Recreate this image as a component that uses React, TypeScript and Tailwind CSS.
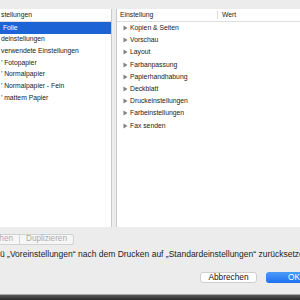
import React from 'react';

// Druckdialog: Voreinstellungen-Liste links, Einstellungen rechts

const presets = [
  { label: '\u00a0Folie', selected: true },
  { label: 'deinstellungen' },
  { label: 'verwendete Einstellungen' },
  { label: '’ Fotopapier' },
  { label: '’ Normalpapier' },
  { label: '’ Normalpapier - Fein' },
  { label: '’ mattem Papier' },
];

const settings = [
  'Kopien & Seiten',
  'Vorschau',
  'Layout',
  'Farbanpassung',
  'Papierhandhabung',
  'Deckblatt',
  'Druckeinstellungen',
  'Farbeinstellungen',
  'Fax senden',
];

function Triangle() {
  return (
    <svg width="5" height="6" viewBox="0 0 5 6" className="shrink-0">
      <path d="M0.5 0.5 L4.5 3 L0.5 5.5 Z" fill="#808080" />
    </svg>
  );
}

export default function App() {
  return (
    <div
      className="w-[300px] h-[300px] overflow-hidden bg-[#ececec] flex flex-col text-[#222]"
      style={{ fontFamily: '"Liberation Sans", Arial, sans-serif' }}
    >
      <div className="mt-[9px] flex h-[218px] gap-[4px]">
        {/* left list */}
        <div className="w-[112px] bg-white border-r border-[#c9c9c9] flex flex-col text-[6.8px]">
          <div className="h-[13px] border-b border-[#dedede] flex items-center pl-[1px] whitespace-nowrap">
            stellungen
          </div>
          {presets.map((p) => (
            <div
              key={p.label}
              className={
                p.selected
                  ? 'h-[11.67px] flex items-center pl-[1px] whitespace-nowrap bg-[#1c63d6] text-white'
                  : 'h-[11.67px] flex items-center pl-[1px] whitespace-nowrap'
              }
            >
              {p.label}
            </div>
          ))}
        </div>

        {/* right table */}
        <div className="flex-1 bg-white border-l border-[#c9c9c9] flex flex-col text-[6.8px]">
          <div className="h-[13px] border-b border-[#dedede] flex items-stretch">
            <div className="w-[101px] border-r border-[#dcdcdc] flex items-center pl-[3px] my-[2px]">
              Einstellung
            </div>
            <div className="flex items-center pl-[4px]">Wert</div>
          </div>
          {settings.map((s) => (
            <div key={s} className="h-[12.2px] flex items-center gap-[2px] pl-[6px] whitespace-nowrap">
              <Triangle />
              <span>{s}</span>
            </div>
          ))}
        </div>
      </div>

      {/* segmented buttons */}
      <div className="mt-[7px] flex">
        <div className="h-[11px] flex border border-[#d2d2d2] border-l-0 rounded-r-[3px] bg-[#f6f6f6] text-[8.2px] text-[#acacac] ml-[-6px]">
          <div className="w-[26px] flex items-center justify-end pr-[6px] border-r border-[#d4d4d4]">hen</div>
          <div className="w-[53px] flex items-center justify-center">Duplizieren</div>
        </div>
      </div>

      <div className="mt-[4px] h-[10px] flex items-center whitespace-nowrap text-[8.5px] text-[#1e1e1e]">
        ü „Voreinstellungen“ nach dem Drucken auf „Standardeinstellungen“ zurücksetzen
      </div>

      <div className="mt-[13px] flex justify-end gap-[9px]">
        <div className="w-[57px] h-[11px] bg-white border border-[#cfcfcf] rounded-[3px] flex items-center justify-center text-[8.3px] text-[#111]">
          Abbrechen
        </div>
        <div className="w-[34px] h-[11px] rounded-l-[3px] bg-gradient-to-b from-[#4b9af9] to-[#1c70f0] flex items-center pl-[22px] text-[8.3px] text-white">
          OK
        </div>
      </div>

      <div className="mt-auto h-[1px] bg-[#a8a8a8]" />
      <div className="h-[5px] bg-gradient-to-b from-[#5a5a5a] to-[#2a2a2a]" />
    </div>
  );
}
